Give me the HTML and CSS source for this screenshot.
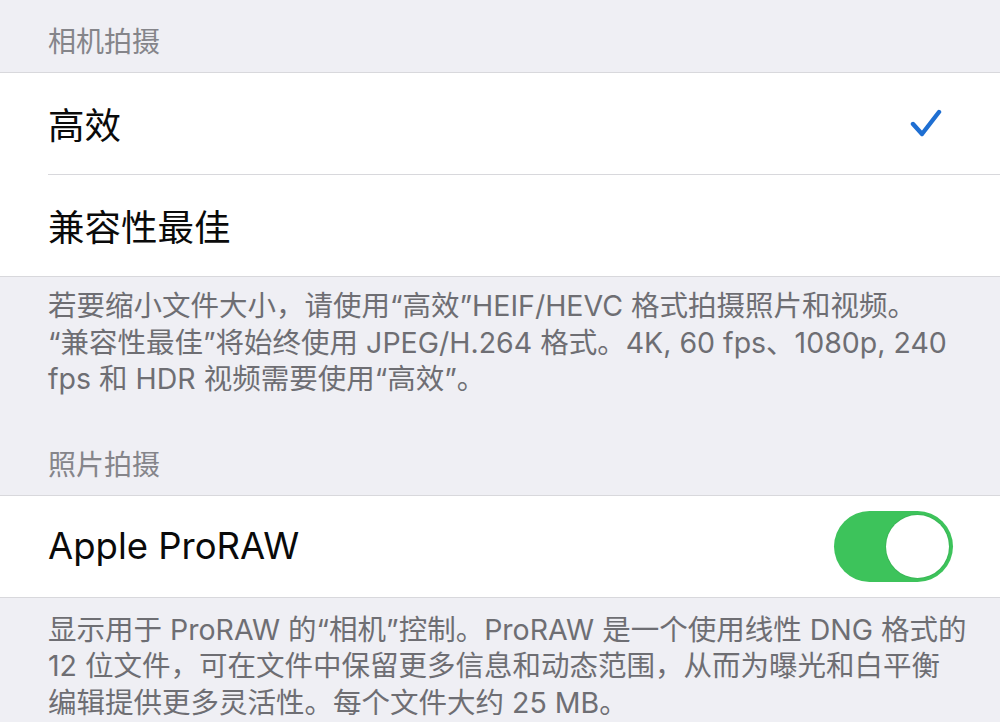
FILE: index.html
```html
<!DOCTYPE html>
<html lang="zh-CN">
<head>
	<meta charset="UTF-8">
	<meta name="viewport" content="width=device-width, initial-scale=1.0">
	<title>格式</title>
	<link rel="stylesheet" href="styles.css">
</head>
<body>
	<div class="section-header">相机拍摄</div>
	<div class="group">
		<div class="row">
			<div class="row-content">
				<span class="row-title">高效</span>
				<svg class="check" width="32" height="30" viewBox="0 0 32 30">
					<path d="M3 15 L12 25 L29 3" fill="none" stroke="#1f6fd2" stroke-width="4.4" stroke-linecap="round" stroke-linejoin="round"/>
				</svg>
			</div>
		</div>
		<div class="row">
			<div class="row-content">
				<span class="row-title">兼容性最佳</span>
			</div>
		</div>
	</div>
	<div class="section-footer">
		若要缩小文件大小，请使用“高效”HEIF/HEVC 格式拍摄照片和视频。<br>
		“兼容性最佳”将始终使用 JPEG/H.264 格式。4K, 60 fps、1080p, 240<br>
		fps 和 HDR 视频需要使用“高效”。
	</div>

	<div class="section-header second">照片拍摄</div>
	<div class="group">
		<div class="row">
			<div class="row-content">
				<span class="row-title">Apple ProRAW</span>
				<div class="toggle on"><div class="knob"></div></div>
			</div>
		</div>
	</div>
	<div class="section-footer last">
		显示用于 ProRAW 的“相机”控制。ProRAW 是一个使用线性 DNG 格式的<br>
		12 位文件，可在文件中保留更多信息和动态范围，从而为曝光和白平衡<br>
		编辑提供更多灵活性。每个文件大约 25 MB。
	</div>
</body>
</html>
```

FILE: styles.css
```css
body {
	margin: 0;
	padding: 0;
	background-color: #efeff4;
	font-family: Inter, "Noto Sans CJK SC", sans-serif;
	overflow: hidden;
}

.section-header {
	padding: 26px 48px 14px;
	font-size: 28px;
	line-height: 32px;
	color: #85858a;
}

.section-header.second {
	padding-top: 51px;
}

.group {
	background-color: #fff;
	border-top: 1px solid #d8d8dc;
	border-bottom: 1px solid #d8d8dc;
}

.row {
	padding-left: 48px;
}

.row-content {
	height: 101px;
	display: flex;
	align-items: center;
	justify-content: space-between;
	padding-right: 47px;
}

.row + .row .row-content {
	border-top: 1px solid #d8d8dc;
}

.row-title {
	font-size: 36.5px;
	color: #0a0a0a;
}

.check {
	margin-right: 11px;
}

.section-footer {
	padding: 11px 30px 0 48px;
	font-size: 28.5px;
	line-height: 36.5px;
	color: #6e6e73;
	white-space: nowrap;
}

.section-footer.last {
	padding-top: 14px;
}

.toggle {
	width: 119px;
	height: 71px;
	border-radius: 36px;
	background-color: #e5e5ea;
	display: flex;
	align-items: center;
	padding: 0 4px;
	box-sizing: border-box;
}

.toggle.on {
	background-color: #3dc35b;
	justify-content: flex-end;
}

.knob {
	width: 63px;
	height: 63px;
	border-radius: 50%;
	background-color: #fff;
	box-shadow: 0 0 0 1px rgba(0, 0, 0, 0.06);
}
```
